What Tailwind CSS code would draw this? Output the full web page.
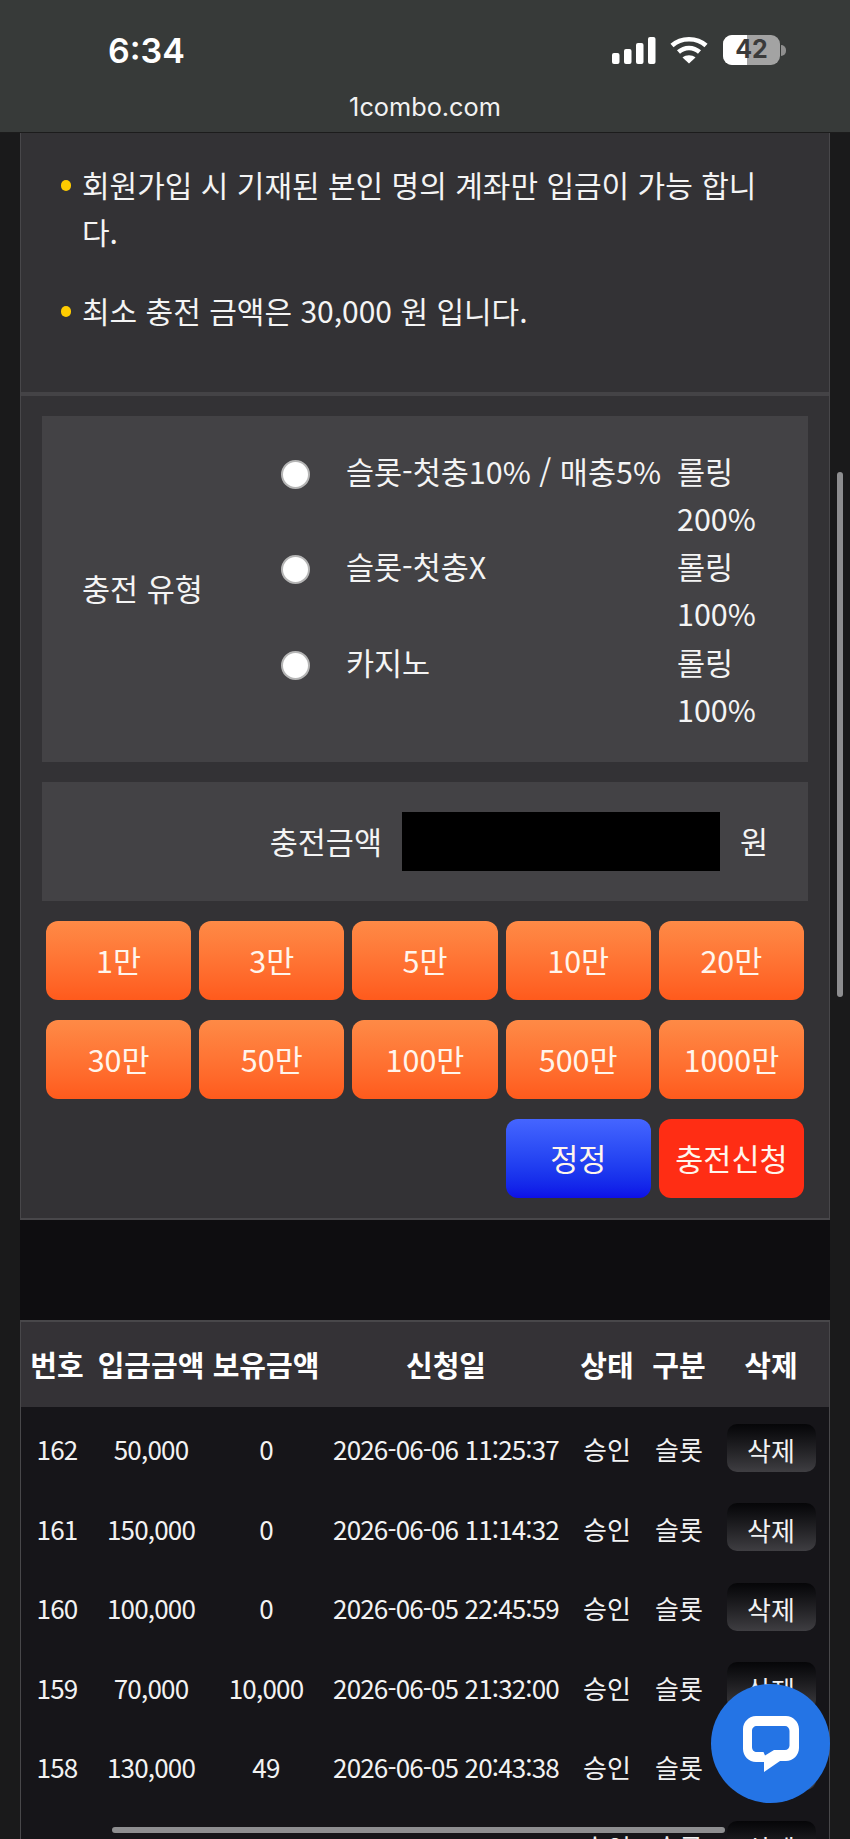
<!DOCTYPE html>
<html lang="ko">
<head>
    <meta charset="UTF-8">
    <meta name="viewport" content="width=device-width, initial-scale=1.0">
    <title>1combo.com</title>
    <script src="https://cdn.jsdelivr.net/npm/@tailwindcss/browser@4"></script>
</head>
<body class="relative h-[1839px] overflow-hidden bg-[#1a1a1b] text-white font-['Noto_Sans_CJK_KR','Noto_Sans',sans-serif]">
    <!-- Browser bar -->
    <header class="h-[133px] bg-[#373a39] border-b border-[#1c1c1c] font-['Inter',sans-serif]">
        <div class="flex items-center justify-between h-[100px] pl-[108px] pr-[64px]">
            <span class="text-[34px] font-semibold">6:34</span>
            <div class="flex items-center">
                <svg class="w-[44px] h-[27px]" viewBox="0 0 44 27" fill="#fff">
                    <rect x="0" y="16" width="7.500" height="11" rx="2"/>
                    <rect x="12" y="12" width="7.500" height="15" rx="2"/>
                    <rect x="24" y="6" width="7.500" height="21" rx="2"/>
                    <rect x="36" y="0" width="7.500" height="27" rx="2"/>
                </svg>
                <svg class="w-[38px] h-[28px] ml-[14px]" viewBox="0 0 38 28" fill="none" stroke="#fff" stroke-width="4.500">
                    <path d="M2 9.500C11 1 27 1 36 9.500"/>
                    <path d="M8.500 16C14.500 10.500 23.500 10.500 29.500 16"/>
                    <path d="M19 27.500L12.500 21.500C16 18.500 22 18.500 25.500 21.500Z" fill="#fff" stroke="none"/>
                </svg>
                <div class="relative ml-[15px] w-[57px] h-[30px] rounded-[9px] overflow-hidden bg-[#a3a3a3]">
                    <div class="w-[24px] h-full bg-white"></div>
                    <span class="absolute inset-0 flex items-center justify-center text-[25px] font-bold text-[#3a3a3a]">42</span>
                </div>
                <div class="w-[5px] h-[11px] ml-[1px] rounded-r-full bg-[#8f8f8f]"></div>
            </div>
        </div>
        <div class="text-center text-[25.300px] leading-[14px] text-[#f2f2f2]">1combo.com</div>
    </header>

    <main class="px-[20px]">
        <!-- Notice + charge form -->
        <section class="bg-[#333235] border-x border-b-2 border-[#48474a]">
            <ul class="h-[263px] pt-[28px] pl-[40px] pr-[45px] text-[30px] leading-[47px] text-[#f4f4f4] border-b-[4px] border-[#444346]">
                <li class="relative pl-[21px] break-all">
                    <span class="absolute left-[0px] top-[19px] w-[10px] h-[11px] rounded-full bg-[#ffcc00]"></span>
                    회원가입 시 기재된 본인 명의 계좌만 입금이 가능 합니다.
                </li>
                <li class="relative pl-[21px] mt-[32px]">
                    <span class="absolute left-[0px] top-[19px] w-[10px] h-[11px] rounded-full bg-[#ffcc00]"></span>
                    최소 충전 금액은 30,000 원 입니다.
                </li>
            </ul>

            <div class="px-[21px] pt-[20px] pb-[20px]">
                <div class="flex items-center h-[346px] bg-[#434245] text-[30.500px] text-[#f4f4f4]">
                    <div class="w-[234px] pl-[40px]">충전 유형</div>
                    <div class="grid grid-cols-[70px_331px_100px] auto-rows-[95.500px] mt-[4px] leading-[47px]">
                        <input type="radio" class="appearance-none w-[29px] h-[29px] mt-[12px] ml-[5px] rounded-full bg-white border-2 border-[#b5b5b5]">
                        <span class="whitespace-nowrap">슬롯-첫충10% / 매충5%</span>
                        <span>롤링<br>200%</span>
                        <input type="radio" class="appearance-none w-[29px] h-[29px] mt-[12px] ml-[5px] rounded-full bg-white border-2 border-[#b5b5b5]">
                        <span>슬롯-첫충X</span>
                        <span>롤링<br>100%</span>
                        <input type="radio" class="appearance-none w-[29px] h-[29px] mt-[12px] ml-[5px] rounded-full bg-white border-2 border-[#b5b5b5]">
                        <span>카지노</span>
                        <span>롤링<br>100%</span>
                    </div>
                </div>

                <div class="flex items-center justify-end h-[119px] mt-[20px] bg-[#434245] text-[30.500px] text-[#f4f4f4]">
                    <span>충전금액</span>
                    <div class="w-[318px] h-[59px] ml-[20px] bg-black"></div>
                    <span class="w-[88px] pl-[20px]">원</span>
                </div>

                <div class="grid grid-cols-5 gap-x-[8px] gap-y-[20px] px-[4px] mt-[20px] text-[30.500px] text-[#fff5ec]">
                    <button class="h-[79px] rounded-[12px] bg-gradient-to-b from-[#fe8a46] to-[#ff5a1c]">1만</button>
                    <button class="h-[79px] rounded-[12px] bg-gradient-to-b from-[#fe8a46] to-[#ff5a1c]">3만</button>
                    <button class="h-[79px] rounded-[12px] bg-gradient-to-b from-[#fe8a46] to-[#ff5a1c]">5만</button>
                    <button class="h-[79px] rounded-[12px] bg-gradient-to-b from-[#fe8a46] to-[#ff5a1c]">10만</button>
                    <button class="h-[79px] rounded-[12px] bg-gradient-to-b from-[#fe8a46] to-[#ff5a1c]">20만</button>
                    <button class="h-[79px] rounded-[12px] bg-gradient-to-b from-[#fe8a46] to-[#ff5a1c]">30만</button>
                    <button class="h-[79px] rounded-[12px] bg-gradient-to-b from-[#fe8a46] to-[#ff5a1c]">50만</button>
                    <button class="h-[79px] rounded-[12px] bg-gradient-to-b from-[#fe8a46] to-[#ff5a1c]">100만</button>
                    <button class="h-[79px] rounded-[12px] bg-gradient-to-b from-[#fe8a46] to-[#ff5a1c]">500만</button>
                    <button class="h-[79px] rounded-[12px] bg-gradient-to-b from-[#fe8a46] to-[#ff5a1c]">1000만</button>
                    <button class="col-start-4 h-[79px] rounded-[12px] bg-gradient-to-b from-[#4565ff] to-[#0e0ee6]">정정</button>
                    <button class="h-[79px] rounded-[12px] bg-[#ff2d14]">충전신청</button>
                </div>
            </div>
        </section>

        <div class="h-[100px] bg-[#0e0d10]"></div>

        <!-- Charge history -->
        <section class="bg-[#161519] border-x border-t-2 border-[#48474a]">
            <table class="w-full table-fixed text-center text-[26px] text-[#f2f2f2]">
                <colgroup>
                    <col class="w-[72px]"><col class="w-[116px]"><col class="w-[114px]"><col class="w-[246px]"><col class="w-[76px]"><col class="w-[68px]"><col>
                </colgroup>
                <thead class="bg-[#343236] text-[29px] text-white">
                    <tr class="h-[85px]"><th class="font-bold">번호</th><th class="font-bold whitespace-nowrap">입금금액</th><th class="font-bold whitespace-nowrap">보유금액</th><th class="font-bold">신청일</th><th class="font-bold">상태</th><th class="font-bold">구분</th><th class="font-bold">삭제</th></tr>
                </thead>
                <tbody>
                    <tr class="h-[2px]"><td colspan="7"></td></tr>
                    <tr class="h-[79.500px]"><td class="tracking-[-0.800px]">162</td><td class="tracking-[-0.800px]">50,000</td><td class="tracking-[-0.800px]">0</td><td class="tracking-[-0.850px] whitespace-nowrap">2026-06-06 11:25:37</td><td>승인</td><td>슬롯</td><td><button class="w-[89px] h-[48px] mb-[2px] pt-[4px] rounded-[10px] bg-gradient-to-b from-[#060608] to-[#3f3e42]">삭제</button></td></tr>
                    <tr class="h-[79.500px]"><td class="tracking-[-0.800px]">161</td><td class="tracking-[-0.800px]">150,000</td><td class="tracking-[-0.800px]">0</td><td class="tracking-[-0.850px] whitespace-nowrap">2026-06-06 11:14:32</td><td>승인</td><td>슬롯</td><td><button class="w-[89px] h-[48px] mb-[2px] pt-[4px] rounded-[10px] bg-gradient-to-b from-[#060608] to-[#3f3e42]">삭제</button></td></tr>
                    <tr class="h-[79.500px]"><td class="tracking-[-0.800px]">160</td><td class="tracking-[-0.800px]">100,000</td><td class="tracking-[-0.800px]">0</td><td class="tracking-[-0.850px] whitespace-nowrap">2026-06-05 22:45:59</td><td>승인</td><td>슬롯</td><td><button class="w-[89px] h-[48px] mb-[2px] pt-[4px] rounded-[10px] bg-gradient-to-b from-[#060608] to-[#3f3e42]">삭제</button></td></tr>
                    <tr class="h-[79.500px]"><td class="tracking-[-0.800px]">159</td><td class="tracking-[-0.800px]">70,000</td><td class="tracking-[-0.800px]">10,000</td><td class="tracking-[-0.850px] whitespace-nowrap">2026-06-05 21:32:00</td><td>승인</td><td>슬롯</td><td><button class="w-[89px] h-[48px] mb-[2px] pt-[4px] rounded-[10px] bg-gradient-to-b from-[#060608] to-[#3f3e42]">삭제</button></td></tr>
                    <tr class="h-[79.500px]"><td class="tracking-[-0.800px]">158</td><td class="tracking-[-0.800px]">130,000</td><td class="tracking-[-0.800px]">49</td><td class="tracking-[-0.850px] whitespace-nowrap">2026-06-05 20:43:38</td><td>승인</td><td>슬롯</td><td><button class="w-[89px] h-[48px] mb-[2px] pt-[4px] rounded-[10px] bg-gradient-to-b from-[#060608] to-[#3f3e42]">삭제</button></td></tr>
                    <tr class="h-[79.500px]"><td class="tracking-[-0.800px]">157</td><td class="tracking-[-0.800px]">100,000</td><td class="tracking-[-0.800px]">0</td><td class="tracking-[-0.850px] whitespace-nowrap">2026-06-04 21:10:04</td><td>승인</td><td>슬롯</td><td><button class="w-[89px] h-[48px] mb-[2px] pt-[4px] rounded-[10px] bg-gradient-to-b from-[#060608] to-[#3f3e42]">삭제</button></td></tr>
                </tbody>
            </table>
        </section>
    </main>

    <!-- Scrollbars -->
    <div class="absolute left-[837px] top-[472px] w-[6px] h-[525px] rounded-full bg-[#8e8e90]"></div>
    <div class="absolute left-[112px] top-[1827px] w-[613px] h-[6px] rounded-full bg-[#8e8e90]"></div>

    <!-- Chat button -->
    <div class="absolute left-[711px] top-[1684px] flex items-center justify-center w-[119px] h-[119px] rounded-full bg-[#2474e5]">
        <svg class="w-[56px] h-[56px]" viewBox="0 0 56 56">
            <path fill="#fff" fill-rule="evenodd" d="M13 0H43C50 0 56 6 56 13V32C56 39 50 45 43 45H37L21 56V46H13C6 46 0 40 0 33V13C0 6 6 0 13 0ZM14 10C11 10 9 12 9 15V31C9 34 11 36 14 36H20.500L22 39.500L31 34H42C44.500 34 46.500 32 46.500 29.500V15C46.500 12 44.500 10 42 10Z"/>
        </svg>
    </div>
</body>
</html>
